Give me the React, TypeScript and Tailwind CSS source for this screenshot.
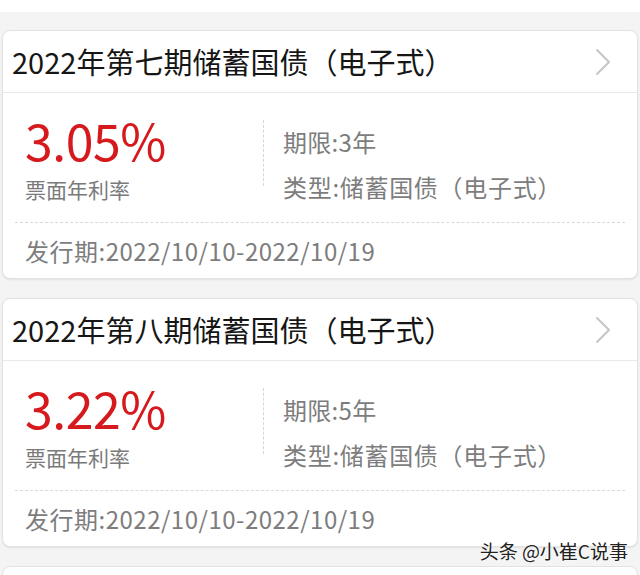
interface Bond {
  title: string;
  rate: string;
  term: string;
}

const bonds: Bond[] = [
  { title: "2022年第七期储蓄国债（电子式）", rate: "3.05%", term: "3年" },
  { title: "2022年第八期储蓄国债（电子式）", rate: "3.22%", term: "5年" },
];

const font = { fontFamily: '"Noto Sans CJK SC", "Noto Sans", sans-serif' };

function Chevron() {
  return (
    <svg width="16" height="28" viewBox="0 0 16 28" fill="none" className="shrink-0">
      <polyline points="2,2 14,14 2,26" stroke="#c6c6c6" strokeWidth="2" strokeLinecap="round" strokeLinejoin="round" />
    </svg>
  );
}

function BondCard({ bond }: { bond: Bond }) {
  return (
    <div className="mx-[2px] shrink-0 rounded-[8px] border border-[#e2e2e2] bg-white shadow-[0_1px_2px_rgba(0,0,0,0.08)]">
      <div className="flex h-[62px] items-center justify-between border-b border-[#e8e8e8] pl-[9px] pr-[26px]">
        <span className="whitespace-nowrap text-[29px] leading-none text-[#161616]">{bond.title}</span>
        <Chevron />
      </div>
      <div className="flex h-[129px] items-start">
        <div className="w-[260px] pl-[22px] pt-[18px]">
          <div className="text-[50px] leading-[56px] tracking-[-0.5px] text-[#d6191d]">{bond.rate}</div>
          <div className="mt-[9px] text-[21px] leading-[26px] text-[#7a7a7a]">票面年利率</div>
        </div>
        <div className="mt-[27px] h-[66px] border-l border-dashed border-[#d6d6d6]" />
        <div className="pl-[19px] pt-[35px] text-[24px] text-[#7d7d7d]">
          <div className="leading-[28px] tracking-[0.3px]">期限:{bond.term}</div>
          <div className="mt-[17px] whitespace-nowrap leading-[28px] tracking-[0.7px]">类型:储蓄国债（电子式）</div>
        </div>
      </div>
      <div className="mx-[12px] border-t border-dashed border-[#d9d9d9]" />
      <div className="flex h-[55px] items-center pl-[22px] text-[24px] tracking-[0.5px] text-[#7d7d7d]">
        发行期:2022/10/10-2022/10/19
      </div>
    </div>
  );
}

export default function App() {
  return (
    <div className="relative h-[575px] w-[640px] overflow-hidden bg-[#f4f4f4]" style={font}>
      <div className="h-[12px] bg-white" />
      <div className="flex flex-col gap-[19px] pt-[18px]">
        {bonds.map((b) => (
          <BondCard key={b.title} bond={b} />
        ))}
        <div className="mx-[2px] h-[40px] shrink-0 rounded-[8px] border border-[#e2e2e2] bg-white" />
      </div>
      <div
        className="absolute right-[12px] top-[539px] text-[19px] leading-[24px] text-[#222]"
        style={{ textShadow: "0 0 2px #fff, 0 0 2px #fff" }}
      >
        头条 @小崔C说事
      </div>
    </div>
  );
}
